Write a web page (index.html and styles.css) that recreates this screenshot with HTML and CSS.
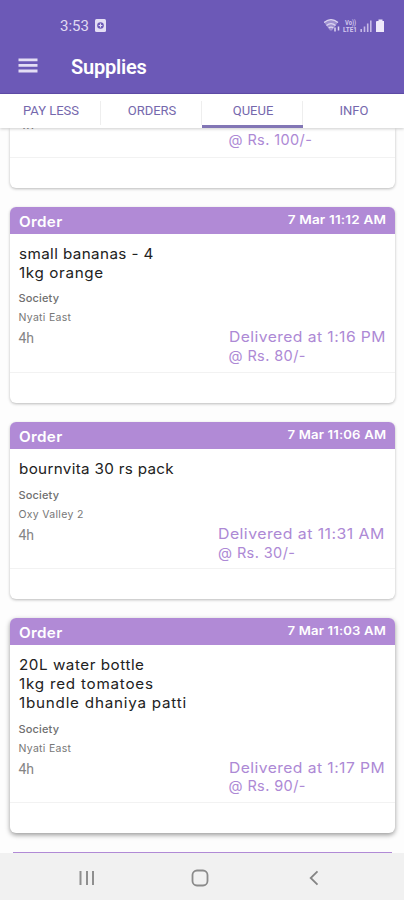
FILE: index.html
```html
<!DOCTYPE html>
<html lang="en">
<head>
<meta charset="utf-8">
<title>Supplies</title>
<link rel="stylesheet" href="styles.css">
</head>
<body>
<div class="screen">
  <header class="top">
    <div class="status">
      <span class="clock">3:53</span>
      <svg class="notice" width="11" height="13" viewBox="0 0 11 13"><rect width="11" height="13" rx="1.5" fill="#e4def5"/><circle cx="5.5" cy="6.5" r="3.3" fill="#6c59b7"/><path d="M3.6 6.5h3.8M5.5 4.6v3.8" stroke="#e4def5" stroke-width="1.1"/></svg>
      <svg class="signals" width="62" height="16" viewBox="0 0 62 16">
        <path d="M0 4.2Q7-1.8 14 4.2L8 12.6H6z" fill="#ddd5f1" opacity=".45"/>
        <g fill="none" stroke="#ddd5f1" stroke-width="1.3"><path d="M0 4.5Q7-1.2 14 4.5M2.5 7.4Q7 3.8 11.5 7.4M4.7 10Q7 8.2 9.3 10"/></g>
        <path d="M11 9.5v4M14.5 8.5v4" stroke="#ddd5f1" stroke-width="1.5"/>
        <text x="21" y="7.4" class="volte" textLength="11" lengthAdjust="spacingAndGlyphs">Vo))</text>
        <text x="19" y="13.8" class="volte" textLength="14" lengthAdjust="spacingAndGlyphs">LTE1</text>
        <path d="M37.2 11v3M40.5 8.5V14M43.7 5.5V14M46.8 2.5V14" stroke="#c5b9e6" stroke-width="1.6"/>
        <path d="M53 3h1.5V1.5h4V3H60v11h-8V4q0-1 1-1z" fill="#eee9fa"/>
      </svg>
    </div>
    <div class="bar">
      <svg class="menu" width="20" height="15" viewBox="0 0 20 15"><path d="M.5 1.8h19M.5 7.4h19M.5 13h19" stroke="#e4def5" stroke-width="2.8"/></svg>
      <h1>Supplies</h1>
    </div>
  </header>
  <nav class="tabs">
    <a class="tab"><span>PAY LESS</span></a>
    <a class="tab"><span>ORDERS</span></a>
    <a class="tab active"><span>QUEUE</span></a>
    <a class="tab"><span>INFO</span></a>
  </nav>
  <main class="feed">
    <article class="card partial">
      <div class="foot"><span class="age">4h</span><p class="delivered"><span class="price">@ Rs. 100/-</span></p></div>
      <div class="actions"></div>
    </article>
    <article class="card">
      <div class="head"><b>Order</b><time>7 Mar 11:12 AM</time></div>
      <div class="items"><p class="s1">small bananas - 4</p><p class="s3">1kg orange</p></div>
      <div class="label">Society</div><div class="place">Nyati East</div>
      <div class="foot"><span class="age">4h</span><p class="delivered"><span class="when">Delivered at 1:16 PM</span><span class="price">@ Rs. 80/-</span></p></div>
      <div class="actions"></div>
    </article>
    <article class="card">
      <div class="head"><b>Order</b><time class="wide">7 Mar 11:06 AM</time></div>
      <div class="items"><p>bournvita 30 rs pack</p></div>
      <div class="label">Society</div><div class="place">Oxy Valley 2</div>
      <div class="foot"><span class="age">4h</span><p class="delivered long"><span class="when">Delivered at 11:31 AM</span><span class="price">@ Rs. 30/-</span></p></div>
      <div class="actions"></div>
    </article>
    <article class="card last">
      <div class="head"><b>Order</b><time class="wide">7 Mar 11:03 AM</time></div>
      <div class="items"><p class="s2">20L water bottle</p><p class="s4">1kg red tomatoes</p><p class="s4">1bundle dhaniya patti</p></div>
      <div class="label">Society</div><div class="place">Nyati East</div>
      <div class="foot"><span class="age">4h</span><p class="delivered"><span class="when">Delivered at 1:17 PM</span><span class="price">@ Rs. 90/-</span></p></div>
      <div class="actions"></div>
    </article>
    <div class="next"></div>
  </main>
  <footer class="keys">
    <svg width="16" height="16" viewBox="0 0 16 16"><path d="M1.5 1v14M8 1v14M14 1v14" stroke="#8f8f8f" stroke-width="2"/></svg>
    <svg class="home" width="18" height="18" viewBox="0 0 18 18"><rect x="1.5" y="1.5" width="15" height="15" rx="4.5" fill="none" stroke="#8b8b8b" stroke-width="1.8"/></svg>
    <svg width="10" height="16" viewBox="0 0 10 16"><path d="M8.5 1.3L1.7 8l6.8 6.7" fill="none" stroke="#858585" stroke-width="1.8"/></svg>
  </footer>
</div>
</body>
</html>
```
FILE: styles.css
```css
* { box-sizing: border-box; }
body, p, h1 { margin: 0; }
body { background: #fdfdfd; font-family: Inter, sans-serif; }
.screen { width: 404px; height: 900px; display: flex; flex-direction: column; overflow: hidden; }

.top { flex: 0 0 94px; background: #6c59b7; border-bottom: 1px solid #604dab; color: #fff; }
.status { display: flex; align-items: center; height: 34px; padding: 17px 18px 0 60px; font: 15px/18px Roboto, sans-serif; color: #e0d9f2; }
.clock { width: 29px; }
.notice { margin-left: 6px; }
.signals { margin-left: auto; }
.volte { font: 700 7px Roboto, sans-serif; fill: #d3c9ee; }
.bar { display: flex; align-items: center; height: 59px; padding: 7px 18px 0; }
.menu { margin-top: -4px; }
h1 { margin-left: 33px; font: 600 20px/24px Roboto, sans-serif; letter-spacing: -.2px; }

.tabs { flex: 0 0 34px; display: grid; grid-template-columns: repeat(4, 1fr); background: #fff; box-shadow: 0 1px 3px #0003; position: relative; }
.tab { display: flex; justify-content: center; align-items: center; padding-top: 3px; border-bottom: 3px solid transparent; font: 13px/18px Roboto, sans-serif; color: #7568ad; background: linear-gradient(#eee, #eee) right 7px / 1px 24px no-repeat; }
.tab:last-child { background: none; }
.tab span { padding-left: 1px; }
.tab.active { border-bottom-color: #8276b5; }

.feed { flex: 1; min-height: 0; overflow: hidden; padding: 0 9px 0 10px; }
.card { margin-bottom: 19px; background: #fff; border-radius: 6px; box-shadow: 0 1px 3px #0004; }
.partial { height: 60px; border-radius: 0 0 6px 6px; }
.last { margin-bottom: 18.5px; box-shadow: 0 2px 5px #0006; }
.head { display: flex; justify-content: space-between; height: 27px; padding: 0 9px 0 8.5px; border-radius: 6px 6px 0 0; background: #b18ad6; color: #fff; }
.head b { font-size: 14.5px; font-weight: 600; line-height: 29px; letter-spacing: .3px; transform: scaleX(1.05); transform-origin: left; }
.head time { font-size: 12px; font-weight: 600; line-height: 25px; letter-spacing: .15px; transform: scaleX(1.13); transform-origin: right; }
.head .wide { transform: scaleX(1.095); }
.items { padding: 11px 8.5px 0; font-size: 14.5px; line-height: 18.7px; letter-spacing: .3px; color: #222; }
.items p { transform: scaleX(1.05); transform-origin: left; }
.items .s1 { letter-spacing: .37px; }
.items .s2 { letter-spacing: .5px; }
.items .s3 { letter-spacing: .6px; }
.items .s4 { letter-spacing: .73px; }
.label, .place { padding-left: 8.5px; line-height: 20px; }
.label { margin-top: 6px; font-size: 11px; font-weight: 500; letter-spacing: .15px; color: #707070; }
.place { font-size: 10.5px; letter-spacing: .3px; color: #777; }
.foot { display: flex; justify-content: space-between; height: 44.5px; padding: 0 10px 0 8.5px; border-bottom: 1px solid #f2f2f2; }
.age { font: 14px/21px Roboto, sans-serif; color: #858585; }
.delivered { width: 156.5px; font-size: 14.5px; line-height: 18.7px; letter-spacing: .4px; color: #ad89d5; }
.long { width: 167px; }
.when, .price { display: block; white-space: nowrap; transform-origin: left; }
.when { transform: scaleX(1.08); }
.long .when { transform: scaleX(1.095); }
.partial .foot { height: 29.5px; }
.partial .age { margin-top: -14px; }
.partial .price { margin-top: 3px; }
.actions { height: 30.2px; }
.next { height: 27px; margin: 0 3px; background: #b18ad6; }

.keys { flex: 0 0 47px; display: flex; align-items: center; justify-content: space-between; padding: 2px 85px 0 79px; background: #f1f1f1; }
.home { margin-right: 4px; }
```
